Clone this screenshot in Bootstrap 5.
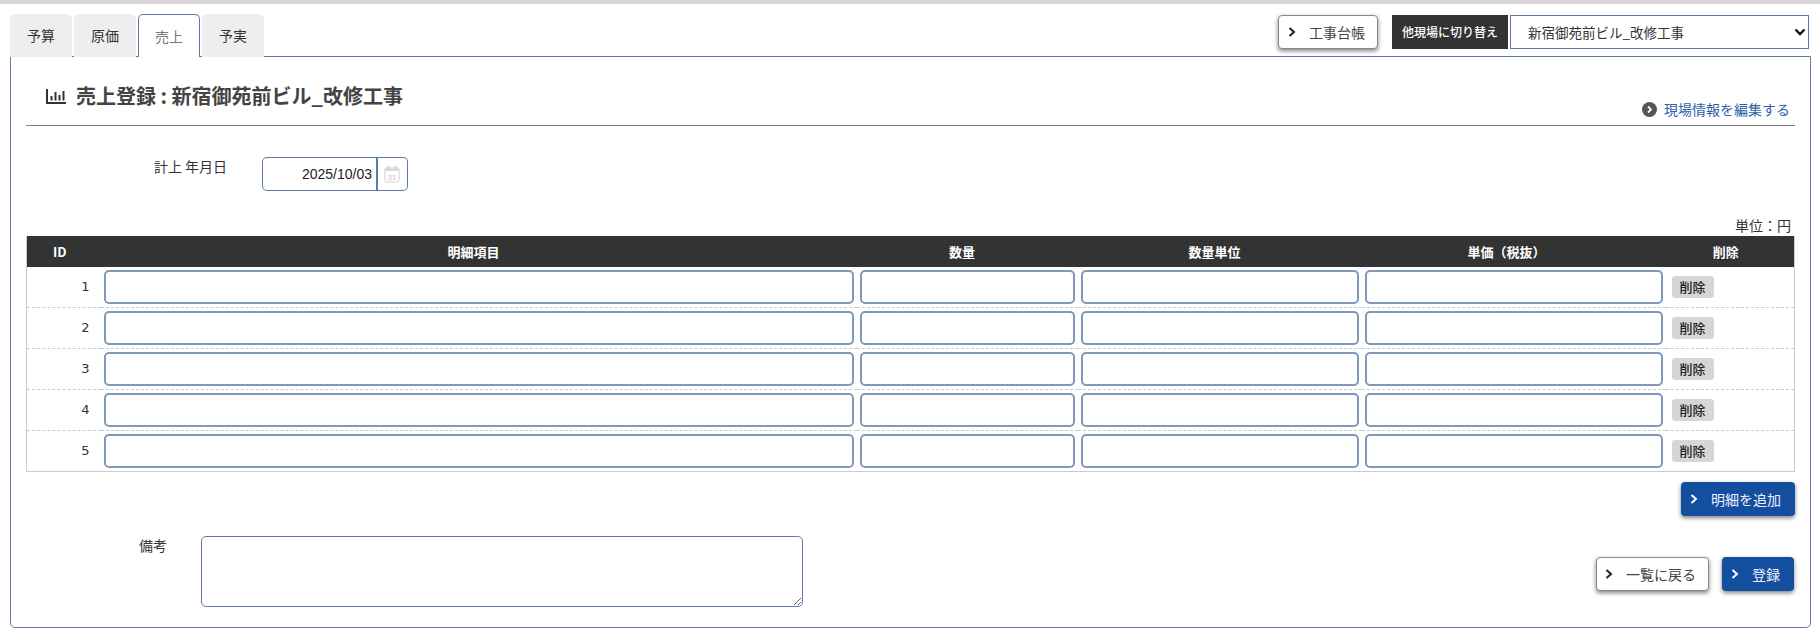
<!DOCTYPE html>
<html lang="ja">
  <head>
    <meta charset="UTF-8" />
    <title>売上登録</title>
    <link href="https://cdn.jsdelivr.net/npm/bootstrap@5.3.3/dist/css/bootstrap.min.css" rel="stylesheet" />
    <style>
      html, body { height: 644px; overflow: hidden; }
      body {
        background: #fff;
        border-top: 4px solid #d6d6d6;
        color: #333;
        font-family: "Noto Sans CJK JP", "Liberation Sans", sans-serif;
        font-size: 14px;
      }
      .page-wrap { padding: 10px 9px 0 10px; }
      .top-row { height: 42px; }
      .tab-list { border: 0; gap: 2px; position: relative; z-index: 1; }
      .tab-list .nav-link {
        width: 62px;
        height: 43px;
        padding: 0;
        display: flex;
        align-items: center;
        justify-content: center;
        background: #eee;
        color: #333;
        font-size: 14px;
        border: 0;
        border-radius: 5px 5px 0 0;
      }
      .tab-list .nav-link.active {
        background: #fff;
        color: #777;
        border: 1px solid #5d7ba5;
        border-bottom: 0;
      }
      .shadow-btn {
        display: inline-flex;
        align-items: center;
        height: 34px;
        padding: 0;
        border-radius: 4px;
        box-shadow: 0 2px 4px rgba(0, 0, 0, 0.5);
        font-size: 14px;
      }
      .btn-plain { background: #fff; border: 1px solid #888; color: #444; }
      .btn-plain:hover { background: #fff; color: #444; border-color: #888; }
      .btn-navy { background: #134e9f; border: 0; color: #eef; }
      .btn-navy:hover { background: #134e9f; color: #eef; }
      .shadow-btn svg { flex: none; }
      .ledger-btn { width: 100px; padding-left: 8px; gap: 12px; }
      .add-btn { width: 114px; padding-left: 8px; gap: 12px; }
      .back-btn { width: 113px; padding-left: 7px; gap: 12px; }
      .save-btn { width: 72px; padding-left: 8px; gap: 12px; }
      .site-switch { margin-left: 14px; height: 34px; margin-right: 2px; gap: 2px; }
      .site-label {
        width: 116px;
        background: #333;
        color: #fff;
        font-size: 12px;
        font-weight: 500;
      }
      .site-select {
        width: 299px;
        height: 34px;
        border: 1px solid #5d7ba5;
        border-radius: 0;
        font-size: 13.5px;
        padding: 0 0 0 17px;
        color: #333;
        background-position: right 2px center;
        background-size: 12px 10px;
        background-image: url("data:image/svg+xml,%3csvg xmlns='http://www.w3.org/2000/svg' viewBox='0 0 12 10'%3e%3cpath fill='none' stroke='%23111' stroke-width='2.4' d='M1.5 2.5l4.5 4.5 4.5-4.5'/%3e%3c/svg%3e");
      }
      .main-panel {
        height: 572px;
        margin-top: 0;
        border: 1px solid #5d7ba5;
        border-radius: 0 0 5px 5px;
        padding: 0 15px;
      }
      .title-row { height: 69px; border-bottom: 1px solid #808080; padding: 0 5px 0 20px; }
      .title-head { padding-top: 29px; gap: 10px; }
      .title-text { font-size: 20px; font-weight: 700; color: #444; margin: 0; line-height: 20px; }
      .edit-link { color: #2a62a8; text-decoration: none; font-size: 14px; gap: 7px; padding-bottom: 5px; }
      .date-row { margin-top: 31px; height: 34px; }
      .date-label { width: 129px; text-align: center; margin-left: 100px; line-height: 18px; }
      .date-group { width: 147px; margin-left: 7px; }
      .input-group > .date-input {
        width: 116px;
        flex: none;
        height: 34px;
        border: 1px solid #5d7ba5;
        border-right-width: 2px;
        border-radius: 5px 0 0 5px;
        text-align: right;
        font-family: "Liberation Sans", sans-serif;
        font-size: 14px;
        color: #222;
        padding: 0 4px 0 0;
      }
      .date-addon {
        width: 31px;
        height: 34px;
        padding: 0;
        justify-content: center;
        background: #fff;
        border: 1px solid #5d7ba5;
        border-left: 0;
        border-radius: 0 5px 5px 0;
      }
      .unit-text { margin-top: 25px; height: 20px; line-height: 18px; padding-right: 4px; text-align: right; }
      .detail-table {
        table-layout: fixed;
        width: 1769px;
        margin: 0;
        border-left: 1px solid #ccc;
        border-right: 1px solid #ccc;
        border-bottom: 1px solid #ccc;
        --bs-table-border-color: transparent;
      }
      .detail-table th {
        height: 31px;
        padding: 0;
        background: #333;
        color: #fff;
        font-size: 13px;
        font-weight: 700;
        text-align: center;
        vertical-align: middle;
        border: 0;
        line-height: 1;
      }
      .detail-table th.pr-a { padding-right: 10px; }
      .detail-table th.pr-b { padding-right: 14px; }
      .detail-table th.pr-c { padding-right: 8px; }
      .detail-table td {
        padding: 3px 3px;
        border: 0;
        border-bottom: 1px dashed #ccc;
        vertical-align: middle;
      }
      .detail-table tr:last-child td { border-bottom: 0; }
      .detail-table td.id-cell { text-align: right; padding-right: 11px; font-family: "DejaVu Sans", sans-serif; font-size: 13px; color: #333; }
      .line-input {
        height: 34px;
        border: 2px solid #8298b8;
        border-radius: 5px;
        padding: 0 6px;
      }
      .del-btn {
        width: 42px;
        height: 22px;
        padding: 0;
        margin-left: 3px;
        background: #d6d6d6;
        border: 0;
        border-radius: 3px;
        color: #222;
        font-size: 13px;
        font-weight: 500;
        line-height: 22px;
        display: block;
      }
      .add-row { margin-top: 10px; height: 34px; }
      .foot-row { margin-top: 20px; height: 71px; padding-right: 1px; }
      .note-label { width: 56px; margin-left: 113px; margin-right: 6px; line-height: 18px; }
      .note-input {
        width: 602px;
        height: 71px;
        border: 1px solid #5d7ba5;
        border-radius: 5px;
      }
      .foot-actions { margin-top: 21px; gap: 13px; }
    </style>
  </head>
  <body>
    <div class="page-wrap">
      <div class="top-row d-flex justify-content-between align-items-start">
        <ul class="nav nav-tabs tab-list">
          <li class="nav-item"><a class="nav-link" href="#">予算</a></li>
          <li class="nav-item"><a class="nav-link" href="#">原価</a></li>
          <li class="nav-item"><a class="nav-link active" href="#">売上</a></li>
          <li class="nav-item"><a class="nav-link" href="#">予実</a></li>
        </ul>
        <div class="d-flex align-items-start" style="margin-top:1px">
          <a class="btn shadow-btn btn-plain ledger-btn" href="#">
            <svg width="10" height="12" viewBox="0 0 10 12"><polyline points="2.5,2 7,6 2.5,10" fill="none" stroke="#222" stroke-width="2" /></svg>
            工事台帳
          </a>
          <div class="d-flex site-switch">
            <div class="site-label d-flex align-items-center justify-content-center">他現場に切り替え</div>
            <select class="form-select site-select">
              <option>新宿御苑前ビル_改修工事</option>
            </select>
          </div>
        </div>
      </div>

      <div class="main-panel">
        <div class="title-row d-flex justify-content-between align-items-end">
          <div class="title-head d-flex align-items-center align-self-start">
            <svg width="20" height="15" viewBox="0 0 20 15">
              <path d="M1 0V14H20M5.5 7V11.5M9.5 3V11.5M13.5 6V11.5M17.5 2V11.5" fill="none" stroke="#333" stroke-width="2" />
            </svg>
            <h1 class="title-text">売上登録 : 新宿御苑前ビル_改修工事</h1>
          </div>
          <a class="edit-link d-flex align-items-center" href="#">
            <svg width="15" height="15" viewBox="0 0 15 15">
              <circle cx="7.5" cy="7.5" r="7.5" fill="#555" />
              <polyline points="6,4.5 9,7.5 6,10.5" fill="none" stroke="#fff" stroke-width="1.8" />
            </svg>
            現場情報を編集する
          </a>
        </div>

        <div class="date-row d-flex">
          <div class="date-label">計上 年月日</div>
          <div class="input-group date-group">
            <input type="text" class="form-control date-input" value="2025/10/03" />
            <span class="input-group-text date-addon">
              <svg width="16" height="18" viewBox="0 0 16 18">
                <rect x="1" y="3" width="14" height="14" rx="1.5" fill="#fff" stroke="#d0d0d0" />
                <path d="M1 3.5H15V6H1Z" fill="#d8d8d8" />
                <path d="M4.5 1V4M11.5 1V4" stroke="#cfcfcf" stroke-width="1.6" />
                <text x="8" y="15" text-anchor="middle" font-size="8" fill="#c4c4c4" font-family="Liberation Sans, sans-serif">31</text>
              </svg>
            </span>
          </div>
        </div>

        <div class="unit-text">単位：円</div>
        <table class="table detail-table">
          <colgroup>
            <col style="width: 74px" />
            <col style="width: 756px" />
            <col style="width: 221px" />
            <col style="width: 284px" />
            <col style="width: 304px" />
            <col />
          </colgroup>
          <thead>
            <tr>
              <th class="pr-c">ID</th>
              <th class="pr-a">明細項目</th>
              <th class="pr-a">数量</th>
              <th class="pr-a">数量単位</th>
              <th class="pr-b">単価（税抜）</th>
              <th class="pr-c">削除</th>
            </tr>
          </thead>
          <tbody id="detail-rows"></tbody>
        </table>

        <div class="add-row d-flex justify-content-end">
          <a class="btn shadow-btn btn-navy add-btn" href="#">
            <svg width="10" height="12" viewBox="0 0 10 12"><polyline points="2.5,2 7,6 2.5,10" fill="none" stroke="#fff" stroke-width="2" /></svg>
            明細を追加
          </a>
        </div>

        <div class="foot-row d-flex justify-content-between">
          <div class="d-flex">
            <div class="note-label">備考</div>
            <textarea class="form-control note-input"></textarea>
          </div>
          <div class="foot-actions d-flex align-items-start">
            <a class="btn shadow-btn btn-plain back-btn" href="#">
              <svg width="10" height="12" viewBox="0 0 10 12"><polyline points="2.5,2 7,6 2.5,10" fill="none" stroke="#222" stroke-width="2" /></svg>
              一覧に戻る
            </a>
            <a class="btn shadow-btn btn-navy save-btn" href="#">
              <svg width="10" height="12" viewBox="0 0 10 12"><polyline points="2.5,2 7,6 2.5,10" fill="none" stroke="#fff" stroke-width="2" /></svg>
              登録
            </a>
          </div>
        </div>
      </div>
    </div>

    <script src="https://cdn.jsdelivr.net/npm/bootstrap@5.3.3/dist/js/bootstrap.bundle.min.js"></script>
    <script>
      const detailRows = document.getElementById("detail-rows");
      [1, 2, 3, 4, 5].forEach((no) => {
        const tr = document.createElement("tr");
        tr.innerHTML = `
          <td class="id-cell">${no}</td>
          <td><input type="text" class="form-control line-input" /></td>
          <td><input type="text" class="form-control line-input" /></td>
          <td><input type="text" class="form-control line-input" /></td>
          <td><input type="text" class="form-control line-input" /></td>
          <td><button type="button" class="btn del-btn">削除</button></td>`;
        detailRows.appendChild(tr);
      });
    </script>
  </body>
</html>
